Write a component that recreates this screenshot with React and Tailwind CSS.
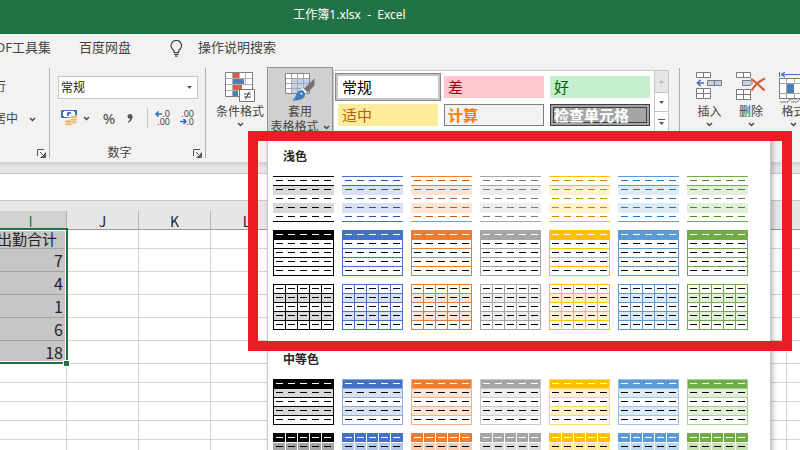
import React, { useState } from 'react';

const palette = [
  { name: '黑色', main: '#000000', dash: '#000000', band: '#d9d9d9', edge: '#000000', deep: '#a6a6a6' },
  { name: '蓝色', main: '#4472c4', dash: '#305496', band: '#d9e1f2', edge: '#8ea9db', deep: '#b4c6e7' },
  { name: '橙色', main: '#ed7d31', dash: '#c65911', band: '#fce4d6', edge: '#f4b084', deep: '#f8cbad' },
  { name: '灰色', main: '#a5a5a5', dash: '#7b7b7b', band: '#ededed', edge: '#c9c9c9', deep: '#dbdbdb' },
  { name: '金色', main: '#ffc000', dash: '#bf8f00', band: '#fff2cc', edge: '#ffd966', deep: '#ffe699' },
  { name: '浅蓝', main: '#5b9bd5', dash: '#2f75b5', band: '#ddebf7', edge: '#9bc2e6', deep: '#bdd7ee' },
  { name: '绿色', main: '#70ad47', dash: '#548235', band: '#e2efda', edge: '#a9d08e', deep: '#c6e0b4' },
];

const columns = ['I', 'J', 'K', 'L', 'M', 'N', 'O', 'P', 'Q', 'R', 'S', 'T'];
const values = ['出勤合计', '7', '4', '1', '6', '18', '', '', '', '', ''];
const five = [0, 1, 2, 3, 4];

const Dashes = ({ head, body }) =>
  five.map((r) =>
    five.map((c) => (
      <rect key={`${r}-${c}`} x={3 + c * 12} y={4 + r * 9} width="7" height="1" fill={r === 0 ? head : body} />
    ))
  );

const Lines = ({ rows = [], cols = [], color }) => (
  <g fill={color}>
    {rows.map((y) => <rect key={`r${y}`} y={y} width="61" height="1" />)}
    {cols.map((x) => <rect key={`c${x}`} x={x} width="1" height="46" />)}
  </g>
);

// One table style preview: 5 x 5 cells, 61 x 46
const Preview = ({ kind, color }) => (
  <svg width="61" height="46" viewBox="0 0 61 46" shapeRendering="crispEdges" className="block">
    {kind === 'banded' && (
      <>
        <rect y="10" width="61" height="9" fill={color.band} />
        <rect y="27" width="61" height="10" fill={color.band} />
        <Lines rows={[0, 9, 45]} color={color.main} />
        <Dashes head={color.dash} body={color.dash} />
      </>
    )}
    {kind === 'header' && (
      <>
        <rect width="61" height="10" fill={color.main} />
        <Lines rows={[18, 27, 36, 45]} cols={[0, 60]} color={color.main} />
        <Dashes head="#fff" body="#000" />
      </>
    )}
    {kind === 'grid' && (
      <>
        <rect y="10" width="61" height="8" fill={color.band} />
        <rect y="28" width="61" height="8" fill={color.band} />
        <Lines rows={[0, 9, 18, 27, 36, 45]} cols={[0, 12, 24, 36, 48, 60]} color={color.main} />
        <Dashes head="#000" body="#000" />
      </>
    )}
    {kind === 'medium' && (
      <>
        <rect width="61" height="9" fill={color.main} />
        <rect y="10" width="61" height="8" fill={color.band} />
        <rect y="28" width="61" height="8" fill={color.band} />
        <Lines rows={[0, 9, 18, 27, 36, 45]} cols={[0, 60]} color={color.edge} />
        <Dashes head="#fff" body="#000" />
      </>
    )}
    {kind === 'blocks' && (
      <>
        <rect width="61" height="9" fill={color.main} />
        <rect y="10" width="61" height="36" fill={color.deep} />
        <Lines rows={[9, 18, 27, 36]} cols={[12, 24, 36, 48]} color="#fff" />
        <Dashes head="#fff" body="#000" />
      </>
    )}
  </svg>
);

const StyleSection = ({ title, kinds }) => (
  <section className="mb-[11px]">
    <h2 className="flex h-[38px] items-center pl-[10px] text-[12px] font-bold text-[#262626]">{title}</h2>
    <div className="grid grid-cols-[repeat(7,61px)] gap-2">
      {kinds.map((kind) =>
        palette.map((color) => (
          <button key={kind + color.name} type="button" aria-label={`${title} ${color.name}`}>
            <Preview kind={kind} color={color} />
          </button>
        ))
      )}
    </div>
  </section>
);

const Chevron = () => (
  <svg width="7" height="5" viewBox="0 0 7 5" fill="none" stroke="#444" strokeWidth="1.4" className="shrink-0">
    <path d="M1 1l2.5 2.5L6 1" />
  </svg>
);

const Triangle = ({ up, color = '#555' }) => (
  <svg width="5" height="3" viewBox="0 0 5 3" fill={color} className="shrink-0">
    <path d={up ? 'M0 3L2.5 0L5 3z' : 'M0 0h5L2.5 3z'} />
  </svg>
);

const Launcher = () => (
  <button type="button" aria-label="更多设置" className="absolute right-[3px] bottom-0">
    <svg width="9" height="9" viewBox="0 0 9 9" fill="none" stroke="#555" className="block">
      <path d="M.5 7V.5H7M3 3l4 4M8.5 3.5v5h-5M7.500 4.500v3H4.500" />
    </svg>
  </button>
);

const Bulb = () => (
  <svg width="13" height="17" viewBox="0 0 13 17" fill="none" stroke="#444" strokeWidth="1.2">
    <path d="M4 12.5V11C3.500 9.600 1 8.500 1 5.700a5.300 5.300 0 0 1 10.600 0C11.600 8.500 9.100 9.600 8.600 11v1.500zM4 14.300h4.600M5 16.100h2.600" />
  </svg>
);

const MoneyIcon = () => (
  <svg width="17" height="16" viewBox="0 0 17 16">
    <path fill="#3f76b8" d="M0 0h16v8H0z" />
    <path fill="#fff" d="M2 2h1V1h10v1h1v4h-1v1H3V6H2z" />
    <circle cx="8" cy="4" r="2.300" fill="#3f76b8" />
    <path fill="#fff" d="M8 4h3v4H8z" />
    <g fill="#e8b96c" stroke="#f3f2f1" strokeWidth=".7">
      <ellipse cx="12.500" cy="12" rx="3.800" ry="1.700" />
      <ellipse cx="12.500" cy="9.500" rx="3.800" ry="1.700" />
      <ellipse cx="12.500" cy="7" rx="3.800" ry="1.700" />
      <ellipse cx="7.500" cy="14" rx="3.800" ry="1.700" />
      <ellipse cx="7.500" cy="11.500" rx="3.800" ry="1.700" />
    </g>
  </svg>
);

const DecimalIcon = ({ more }) => (
  <svg width="16" height="16" viewBox="0 0 16 16" fontFamily="Open Sans, sans-serif" fontSize="9" fill="#333">
    <text x="15" y="7" textAnchor="end">{more ? '.0' : '.00'}</text>
    <text x="15" y="15" textAnchor="end">{more ? '.00' : '.0'}</text>
    <path
      d={more ? 'M7 4H1M3.500 1.500L1 4l2.500 2.500' : 'M1 11.500h6M4.500 9L7 11.500L4.500 14'}
      fill="none" stroke="#2f6db5" strokeWidth="1.500"
    />
  </svg>
);

const ConditionalIcon = () => (
  <svg width="30" height="31" viewBox="0 0 30 31">
    <path fill="#fff" d="M.5.5h27v24H.5z" />
    <path fill="#d65f3f" d="M8 1h6v5H8zM8 13h9v5H8z" />
    <path fill="#4a80b8" d="M8 7h11v5H8zM8 19h5v5H8z" />
    <path d="M7.500.5v24M.5 6.500h27M.5 12.500h27M.5 18.500h27M14.500.5v6M20.500.5v12" fill="none" stroke="#b0b0b0" />
    <path d="M.5.5h27v24H.5z" fill="none" stroke="#808080" />
    <path fill="#fff" stroke="#777" d="M14.500 17.500h15v12h-15z" />
    <path d="M19 22h7M19 25h7M24.500 19.500l-4 8" stroke="#444" fill="none" />
  </svg>
);

const FormatTableIcon = () => (
  <svg width="31" height="30" viewBox="0 0 31 30">
    <path fill="#fff" d="M.5 1.500h24v20H.5z" />
    <path fill="#bdd3ea" d="M7 7h18v15H7z" />
    <path d="M6.500 1v21M12.500 1v21M18.500 1v21M.5 6.500h24M.5 11.500h24M.5 16.500h24" stroke="#a5a5a5" fill="none" />
    <path d="M.5 1.500h24v20H.5z" fill="none" stroke="#858585" />
    <path fill="#747474" d="M29.500 6.500v7l-8 8-4-3.500z" />
    <path fill="#fff" d="M16 17l2-1 4 4-1.500 2z" />
    <path fill="#3f7dbd" d="M14 19c3-2 6.500.5 6 4-.6 4.500-7 6-13 5.500C11 26.500 10.500 21.500 14 19z" />
    <path fill="#e8f1fa" d="M15 21c1.500-.5 3 .5 2.500 2-1 0-2-1-2.500-2z" />
  </svg>
);

const InsertIcon = () => (
  <svg width="27" height="28" viewBox="0 0 27 28" fill="#fff" stroke="#7b7b7b">
    <path d="M.5.5h14v5H.5zM7.500.5v5M.5 16.500h14v10H.5zM7.500 16.500v10M.5 21.500h14" />
    <path fill="#bdd3ea" d="M11.500 8.500h14v5h-14zM18.500 8.500v5" />
    <path d="M8 11H2M4.500 8L1.500 11l3 3" fill="none" stroke="#3f76b8" strokeWidth="1.700" />
  </svg>
);

const DeleteIcon = () => (
  <svg width="30" height="28" viewBox="0 0 30 28" fill="#fff" stroke="#7b7b7b">
    <path d="M.5.5h14v5H.5zM7.500.5v5M.5 17.500h14v10H.5zM7.500 17.500v10M.5 22.500h14" />
    <path fill="#bdd3ea" d="M6.500 8.500h8l2 2.500-2 2.500h-8z" />
    <path d="M15 7c5 3 9 7 13.500 11.500M29 6.500C23 9 19 13 15.500 18.500" fill="none" stroke="#d65f3f" strokeWidth="2.200" />
  </svg>
);

const FormatIcon = () => (
  <svg width="29" height="31" viewBox="0 0 29 31" fill="none">
    <path d="M.5 0v5M28.500 0v5M2 2.500h25M6 0L2.500 2.500L6 5M23 0l3.500 2.500L23 5" stroke="#3f76b8" strokeWidth="1.200" />
    <path d="M.5 6.500h28v20H.5z" fill="#fff" />
    <path d="M7.500 6.500v20M15.500 6.500v5M15.500 21.500v5M22.500 6.500v20M.5 11.500h28M.5 21.500h28" stroke="#a5a5a5" />
    <path d="M.5 6.500h28v20H.5z" stroke="#7b7b7b" />
    <path fill="#4a80b8" d="M8 12h7v9H8z" />
    <path d="M1 30h8l2-3h7M12 30h6l3-3" stroke="#7b7b7b" />
  </svg>
);

const BigButton = ({ icon, label }) => (
  <button type="button" className="flex flex-col items-center">
    <span className="flex h-8 items-start">{icon}</span>
    <span className="h-[18px] text-[12px] leading-4 whitespace-nowrap">{label}</span>
    <Chevron />
  </button>
);

const Swatch = ({ className, children }) => (
  <button type="button" className={`flex h-[22px] w-[100px] items-center text-[15px] leading-4 whitespace-nowrap ${className}`}>
    {children}
  </button>
);

const Ribbon = () => {
  const [format, setFormat] = useState('常规');

  return (
    <div className="flex h-[100px] items-start bg-[#f3f2f1] pt-[6px] text-[12px] text-[#444]">
      <div className="relative h-[90px] w-[50px] shrink-0 border-r border-[#b3b0ad]">
        <button type="button" className="-ml-[18px] flex h-[38px] items-center whitespace-nowrap">换行</button>
        <button type="button" className="-ml-[6px] flex h-[26px] items-center gap-[11px] whitespace-nowrap">
          居中 <Chevron />
        </button>
        <Launcher />
      </div>

      <div className="relative flex h-[90px] w-[156px] shrink-0 flex-col border-r border-[#b3b0ad] px-2 pt-2">
        <div className="relative">
          <select
            aria-label="数字格式"
            value={format}
            onChange={(e) => setFormat(e.target.value)}
            className="block h-[23px] w-[140px] appearance-none border border-[#c8c6c4] bg-white pl-[2px] text-[12px] text-[#222]"
          >
            <option>常规</option>
            <option>数值</option>
            <option>货币</option>
          </select>
          <span className="pointer-events-none absolute inset-y-0 right-[5px] flex items-center"><Triangle /></span>
        </div>
        <div className="mt-[9px] flex h-[22px] items-center pl-[3px]">
          <button type="button" aria-label="会计数字格式" className="flex items-center gap-[5px]">
            <MoneyIcon /> <Chevron />
          </button>
          <button type="button" className="ml-3 w-[14px] text-[15px] leading-5">%</button>
          <button type="button" aria-label="千位分隔样式" className="ml-[11px]">
            <svg width="6" height="9" viewBox="0 0 6 9" fill="#555">
              <path d="M3 0a2.500 2.500 0 0 0-2.500 2.500C.5 4 2 5 3.300 4.600 3 6 2 7.200.8 8L1.500 8.700C4 7.500 5.600 5 5.600 2.800 5.600 1 4.500 0 3 0z" />
            </svg>
          </button>
          <span className="mr-[7px] ml-[14px] h-5 w-px shrink-0 bg-[#c8c6c4]" />
          <button type="button" aria-label="增加小数位数"><DecimalIcon more /></button>
          <button type="button" aria-label="减少小数位数" className="ml-2"><DecimalIcon /></button>
        </div>
        <div className="mt-[17px] pr-4 text-center leading-4">数字</div>
        <Launcher />
      </div>

      <div className="-mt-px flex shrink-0 items-start">
        <div className="w-[61px] pt-[5px] pl-[10px]">
          <BigButton icon={<ConditionalIcon />} label="条件格式" />
        </div>
        <div className="relative">
          <button type="button" className="flex h-[70px] w-[66px] flex-col items-center border border-[#979593] bg-[#d2d0ce] pt-1">
            <span className="flex h-8 items-start"><FormatTableIcon /></span>
            <span className="h-[15px] leading-4">套用</span>
            <span className="flex items-center gap-1 leading-4 whitespace-nowrap">表格格式 <Chevron /></span>
          </button>
          <div className="absolute top-full left-0 z-10 w-[504px] border border-[#c8c6c4] bg-white pl-[5px] shadow-[2px_2px_5px_rgba(0,0,0,0.25)]">
            <StyleSection title="浅色" kinds={['banded', 'header', 'grid']} />
            <StyleSection title="中等色" kinds={['medium', 'blocks', 'grid']} />
          </div>
        </div>
      </div>

      <div className="mt-[2px] flex h-[68px] shrink-0 border border-[#c8c6c4] bg-white">
        <div className="grid grid-cols-[repeat(3,100px)] content-start gap-x-[6px] gap-y-[6px] py-[5px] pr-1 pl-1">
          <Swatch className="bg-white pl-1 text-black outline outline-[#8a8886] ring-2 ring-[#c8c6c4] outline-offset-2">常规</Swatch>
          <Swatch className="bg-[#ffc7ce] pl-1 text-[#9c0006]">差</Swatch>
          <Swatch className="bg-[#c6efce] pl-1 text-[#006100]">好</Swatch>
          <Swatch className="bg-[#ffeb9c] pl-1 text-[#b3600f]">适中</Swatch>
          <Swatch className="border border-[#7f7f7f] bg-[#f2f2f2] pl-[3px] font-bold text-[#fa7d00]">计算</Swatch>
          <Swatch className="border-4 border-double border-[#3f3f3f] bg-[#a5a5a5] font-bold text-white">检查单元格</Swatch>
        </div>
        <div className="flex w-[14px] flex-col border-l border-[#c8c6c4]">
          <button type="button" aria-label="向上" className="flex h-[21px] items-center justify-center bg-[#e6e6e6]">
            <Triangle up color="#b5b5b5" />
          </button>
          <button type="button" aria-label="向下" className="flex h-5 items-center justify-center border-y border-[#c8c6c4]">
            <Triangle />
          </button>
          <button type="button" aria-label="其他" className="flex h-5 flex-col items-center justify-center gap-[2px]">
            <span className="h-px w-[7px] bg-[#555]" />
            <Triangle />
          </button>
        </div>
      </div>

      <div className="ml-[10px] flex h-[90px] shrink-0 gap-[13px] border-l border-[#b3b0ad] pt-1 pl-4">
        <BigButton icon={<InsertIcon />} label="插入" />
        <BigButton icon={<DeleteIcon />} label="删除" />
        <BigButton icon={<FormatIcon />} label="格式" />
      </div>
    </div>
  );
};

const Sheet = () => (
  <div className="relative bg-white font-['Noto_Sans_CJK_SC',sans-serif]">
    <table className="-ml-[5px] w-[864px] table-fixed border-separate border-spacing-0">
      <thead>
        <tr className="h-[19px] text-[14px] leading-4 text-[#222]">
          {columns.map((col, i) => (
            <th
              key={col}
              className={`w-[72px] border-r border-b border-r-[#b4b4b4] border-b-[#999] p-0 pt-[2px] font-normal ${i === 0 ? 'bg-[#d2d2d2] text-[#217346]' : 'bg-[#e6e6e6]'}`}
            >
              {col}
            </th>
          ))}
        </tr>
      </thead>
      <tbody>
        {values.map((value, r) => (
          <tr key={r} className={r > 0 && r < 6 ? 'h-[23px]' : 'h-[19px]'}>
            {columns.map((col, c) => (
              <td
                key={col}
                className={`border-r border-b p-0 whitespace-nowrap text-[#222] ${
                  c === 0 && r < 6 ? 'border-r-[#d4d4d4] border-b-[#a3a3a3] bg-[#c6c6c6]' : 'border-[#d4d4d4]'
                } ${r === 0 ? 'pl-[2px] text-left text-[15px] leading-4' : 'pr-[3px] text-right text-[16px] leading-5'}`}
              >
                {c === 0 ? value : ''}
              </td>
            ))}
          </tr>
        ))}
      </tbody>
    </table>
    <div className="absolute top-[17px] -left-2 h-[136px] w-[76px] border-2 border-[#217346] shadow-[inset_0_0_0_1px_#fff]">
      <span className="absolute -right-[4px] -bottom-[5px] h-[7px] w-[7px] border border-white bg-[#217346]" />
    </div>
  </div>
);

const App = () => (
  <div className="relative h-screen overflow-hidden bg-white font-['Noto_Sans','Noto_Sans_CJK_SC',sans-serif]">
    <header className="flex h-[34px] items-center bg-[#217346] pr-[101px] pb-1 text-[12px] text-white">
      <h1 className="w-full text-center whitespace-pre">工作簿1.xlsx  -  Excel</h1>
    </header>

    <nav className="flex h-7 items-center bg-[#f3f2f1] text-[13px] whitespace-nowrap text-[#444]">
      <a href="#pdf" className="-ml-3 w-[91px]">PDF工具集</a>
      <a href="#pan" className="w-[91px]">百度网盘</a>
      <a href="#search" className="flex items-center gap-[15px]"><Bulb /> 操作说明搜索</a>
    </nav>

    <Ribbon />

    <div className="h-3 border-b border-[#c6c6c6] bg-gradient-to-b from-[#cfcfcf] to-[#e6e6e6] to-50%" />
    <input aria-label="编辑栏" className="block h-[26px] w-full bg-white outline-none" />
    <div className="h-[11px] border-t border-[#c6c6c6] bg-[#e6e6e6]" />

    <Sheet />

    {/* highlight around the light styles */}
    <div className="pointer-events-none absolute top-[131px] left-[248px] z-20 h-[220px] w-[544px] border-[10px] border-[#ed1c24]" />
  </div>
);

export default App;
